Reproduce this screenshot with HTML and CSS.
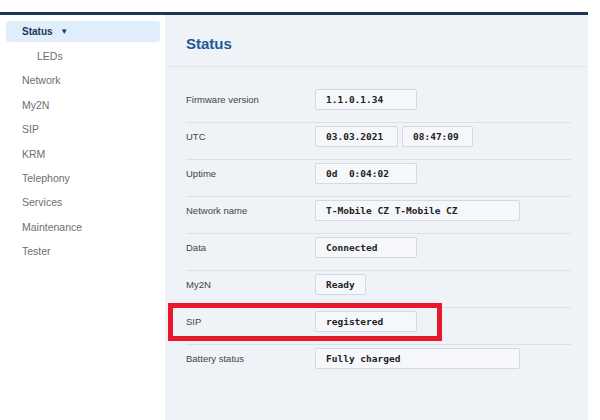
FILE: index.html
```html
<!DOCTYPE html>
<html>
<head>
    <title>Status</title>
    <link rel="stylesheet" href="styles.css">
</head>
<body>
    <div class="page">
        <nav class="sidebar">
            <a class="nav-item active">Status <span class="caret">&#9660;</span></a>
            <a class="nav-item sub">LEDs</a>
            <a class="nav-item">Network</a>
            <a class="nav-item">My2N</a>
            <a class="nav-item">SIP</a>
            <a class="nav-item">KRM</a>
            <a class="nav-item">Telephony</a>
            <a class="nav-item">Services</a>
            <a class="nav-item">Maintenance</a>
            <a class="nav-item">Tester</a>
        </nav>
        <main class="panel">
            <h1 class="panel-title">Status</h1>
            <div class="rows">
                <div class="row">
                    <span class="label">Firmware version</span>
                    <span class="field">1.1.0.1.34</span>
                </div>
                <div class="row">
                    <span class="label">UTC</span>
                    <span class="field date">03.03.2021</span>
                    <span class="field time">08:47:09</span>
                </div>
                <div class="row">
                    <span class="label">Uptime</span>
                    <span class="field">0d&nbsp;&nbsp;0:04:02</span>
                </div>
                <div class="row">
                    <span class="label">Network name</span>
                    <span class="field wide">T-Mobile CZ T-Mobile CZ</span>
                </div>
                <div class="row">
                    <span class="label">Data</span>
                    <span class="field">Connected</span>
                </div>
                <div class="row">
                    <span class="label">My2N</span>
                    <span class="field small">Ready</span>
                </div>
                <div class="row marked">
                    <span class="label">SIP</span>
                    <span class="field">registered</span>
                    <div class="highlight"></div>
                </div>
                <div class="row">
                    <span class="label">Battery status</span>
                    <span class="field wide">Fully charged</span>
                </div>
            </div>
        </main>
    </div>
</body>
</html>
```

FILE: styles.css
```css
html, body {
    margin: 0;
    height: 100%;
    background-color: #fff;
    font-family: "Liberation Sans", Arial, sans-serif;
}

.page {
    display: flex;
    width: 588px;
    height: 405px;
    margin-top: 12px;
    border-top: 3px solid #1c3656;
}

.sidebar {
    width: 165px;
    flex-shrink: 0;
    padding: 6px 5px 0 6px;
    box-sizing: border-box;
}

.nav-item {
    display: block;
    height: 24.4px;
    line-height: 24.4px;
    padding-left: 16px;
    font-size: 10.5px;
    color: #6e6e6e;
}

.nav-item.active {
    height: 21px;
    line-height: 21px;
    margin-bottom: 2px;
    background-color: #dfeefa;
    border-radius: 3px;
    font-size: 10px;
    font-weight: bold;
    color: #1e3554;
}

.caret {
    font-size: 8px;
    margin-left: 5px;
    vertical-align: 1px;
}

.nav-item.sub {
    padding-left: 31px;
}

.panel {
    flex: 1;
    background-color: #eff2f7;
}

.panel-title {
    margin: 0;
    padding: 20px 21px 13px;
    line-height: 18px;
    font-size: 15px;
    font-weight: bold;
    color: #1b5a98;
    border-bottom: 1px solid #e1e6ec;
}

.rows {
    padding: 19px 17px 0 21px;
}

.row {
    display: flex;
    align-items: flex-start;
    gap: 4px;
    height: 37px;
    padding-top: 3px;
    box-sizing: border-box;
    border-bottom: 1px solid #dce1e7;
}

.row:last-child {
    border-bottom: none;
}

.label {
    width: 125px;
    line-height: 21px;
    font-size: 9.5px;
    color: #444;
}

.field {
    width: 102px;
    height: 21px;
    line-height: 19px;
    padding-left: 10px;
    box-sizing: border-box;
    background-color: #f5f7fa;
    border: 1px solid #d3d9e1;
    border-radius: 2px;
    font-family: "DejaVu Sans Mono", "Liberation Mono", monospace;
    font-size: 9.5px;
    font-weight: bold;
    color: #222;
}

.field.date {
    width: 83px;
}

.field.time {
    width: 71px;
}

.field.wide {
    width: 205px;
}

.field.small {
    width: 51px;
}

.marked {
    position: relative;
}

.highlight {
    position: absolute;
    left: -18px;
    top: -5px;
    width: 274px;
    height: 38px;
    box-sizing: border-box;
    border: 5px solid #e8192c;
}
```
